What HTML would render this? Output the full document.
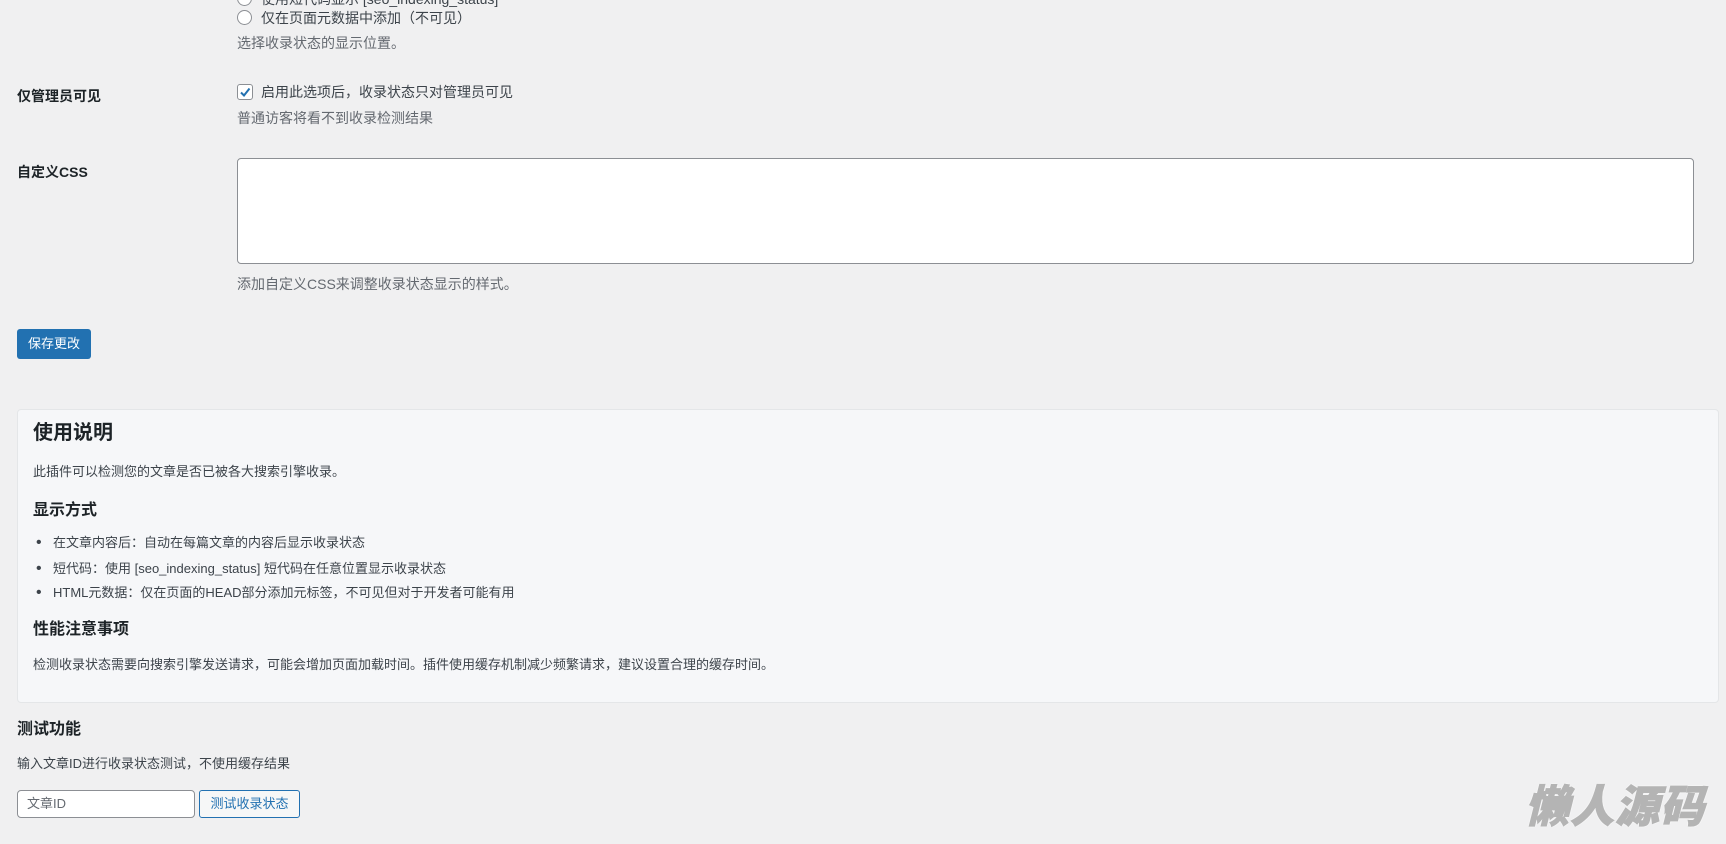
<!DOCTYPE html>
<html><head><meta charset="utf-8"><style>
body{margin:0;width:1726px;height:844px;background:#f0f0f1;font-family:"Liberation Sans","Noto Sans CJK SC",sans-serif;color:#3c434a;font-size:14px;position:relative;overflow:hidden}
.a{position:absolute;white-space:nowrap;line-height:20px}
.s{font-size:13px}
.lbl{font-weight:bold;color:#1d2327;font-size:14px}
.desc{color:#646970}
.radio{position:absolute;width:15px;height:15px;border:1px solid #8c8f94;border-radius:50%;background:#fff;box-sizing:border-box}
.box{position:absolute;left:17px;top:409px;width:1702px;height:294px;background:#f6f7f9;border:1px solid #e4e6e8;border-radius:4px;box-sizing:border-box}
</style></head><body>
<div class="radio" style="left:237px;top:-9px"></div>
<div class="a" style="left:261px;top:-11px">使用短代码显示 [seo_indexing_status]</div>
<div class="radio" style="left:237px;top:10px"></div>
<div class="a" style="left:261px;top:8px">仅在页面元数据中添加（不可见）</div>
<div class="a desc" style="left:237px;top:33px">选择收录状态的显示位置。</div>

<div class="a lbl" style="left:17px;top:86px">仅管理员可见</div>
<div style="position:absolute;left:237px;top:84px;width:16px;height:16px;border:1px solid #8c8f94;border-radius:3px;background:#fff;box-sizing:border-box">
<svg width="14" height="14" viewBox="0 0 14 14" style="position:absolute;left:0;top:0"><path d="M3 7.5 L6 10.5 L11.5 3.5" stroke="#2271b1" stroke-width="2" fill="none"/></svg></div>
<div class="a" style="left:261px;top:82px">启用此选项后，收录状态只对管理员可见</div>
<div class="a desc" style="left:237px;top:108px">普通访客将看不到收录检测结果</div>

<div class="a lbl" style="left:17px;top:162px">自定义CSS</div>
<div style="position:absolute;left:237px;top:158px;width:1457px;height:106px;background:#fff;border:1px solid #8c8f94;border-radius:4px;box-sizing:border-box"></div>
<div class="a desc" style="left:237px;top:274px">添加自定义CSS来调整收录状态显示的样式。</div>

<div style="position:absolute;left:17px;top:329px;width:74px;height:30px;background:#2271b1;border-radius:3px;color:#fff;font-size:13px;line-height:30px;text-align:center">保存更改</div>

<div class="box"></div>
<div class="a" style="left:33px;top:420px;font-size:20px;line-height:26px;font-weight:bold;color:#1d2327">使用说明</div>
<div class="a s" style="left:33px;top:462px">此插件可以检测您的文章是否已被各大搜索引擎收录。</div>
<div class="a" style="left:33px;top:500px;font-size:16px;line-height:22px;font-weight:bold;color:#1d2327">显示方式</div>
<div class="a" style="left:36px;top:533px;font-size:16px">•</div><div class="a s" style="left:53px;top:533px">在文章内容后：自动在每篇文章的内容后显示收录状态</div>
<div class="a" style="left:36px;top:559px;font-size:16px">•</div><div class="a s" style="left:53px;top:559px">短代码：使用 [seo_indexing_status] 短代码在任意位置显示收录状态</div>
<div class="a" style="left:36px;top:583px;font-size:16px">•</div><div class="a s" style="left:53px;top:583px">HTML元数据：仅在页面的HEAD部分添加元标签，不可见但对于开发者可能有用</div>
<div class="a" style="left:33px;top:619px;font-size:16px;line-height:22px;font-weight:bold;color:#1d2327">性能注意事项</div>
<div class="a s" style="left:33px;top:655px">检测收录状态需要向搜索引擎发送请求，可能会增加页面加载时间。插件使用缓存机制减少频繁请求，建议设置合理的缓存时间。</div>

<div class="a" style="left:17px;top:719px;font-size:16px;line-height:22px;font-weight:bold;color:#1d2327">测试功能</div>
<div class="a s" style="left:17px;top:754px">输入文章ID进行收录状态测试，不使用缓存结果</div>
<div style="position:absolute;left:17px;top:790px;width:178px;height:28px;background:#fff;border:1px solid #8c8f94;border-radius:4px;box-sizing:border-box;color:#646970;line-height:26px;padding-left:9px;font-size:13px">文章ID</div>
<div style="position:absolute;left:199px;top:790px;width:101px;height:28px;background:#f6f7f7;border:1px solid #2271b1;border-radius:3px;box-sizing:border-box;color:#2271b1;line-height:26px;text-align:center;font-size:13px">测试收录状态</div>

<div class="a" style="left:1525px;top:783px;font-size:44px;line-height:50px;font-weight:900;font-style:italic;color:#b4b4b4;letter-spacing:1px;-webkit-text-stroke:1px #b4b4b4;text-shadow:0 0 2px #fff,0 0 2px #fff">懒人源码</div>
</body></html>
